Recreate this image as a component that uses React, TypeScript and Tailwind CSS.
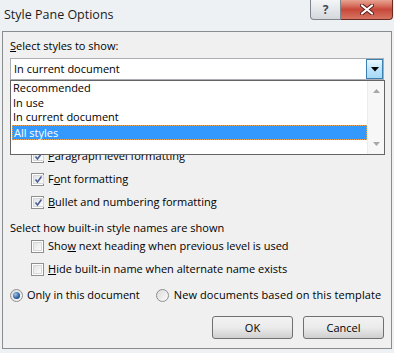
import React from 'react';

const FONT = "font-['Open_Sans','Liberation_Sans',sans-serif]";

function CheckBox({ checked }: { checked?: boolean }) {
    return (
        <span className="w-[13px] h-[13px] shrink-0 border border-[#8e8f8f] bg-white p-[1px] flex">
            <span className="flex-1 border border-[#d6d7d9] bg-gradient-to-br from-[#e3e4e6] to-[#fbfbfb] flex items-center justify-center">
                {checked && (
                    <svg width="9" height="9" viewBox="0 0 9 9">
                        <path d="M1.5 4.5 L3.5 7 L7.5 1.5" fill="none" stroke="#4a5f97" strokeWidth="1.6" />
                    </svg>
                )}
            </span>
        </span>
    );
}

function Radio({ checked }: { checked?: boolean }) {
    return (
        <span className="w-[13px] h-[13px] shrink-0 rounded-full border border-[#8e8f8f] bg-gradient-to-br from-[#dcdcdc] to-[#fafafa] flex items-center justify-center">
            {checked && (
                <span className="w-[7px] h-[7px] rounded-full bg-[radial-gradient(circle_at_35%_35%,#9fc3ea,#1b4f8f_70%)]" />
            )}
        </span>
    );
}

function CheckRow({ checked, children }: { checked?: boolean; children: React.ReactNode }) {
    return (
        <div className="h-[23px] flex items-center gap-[4px] pl-[21px] whitespace-nowrap">
            <CheckBox checked={checked} />
            <span>{children}</span>
        </div>
    );
}

function Btn({ children }: { children: React.ReactNode }) {
    return (
        <button className="w-[81px] h-[23px] rounded-[3px] border border-[#707070] bg-gradient-to-b from-[#f2f2f2] via-[#ebebeb] to-[#cfcfcf] text-[#000] leading-none">
            {children}
        </button>
    );
}

export default function App() {
    return (
        <div className={`w-[394px] h-[353px] bg-[#eef1f4] text-[11px] text-black overflow-hidden ${FONT}`}>
            {/* Title bar */}
            <div className="h-[31px] flex justify-between items-start">
                <span className="pl-[4px] pt-[6px] text-[12.5px] leading-[18px] text-[#1b1b1b]">Style Pane Options</span>
                <div className="flex mr-[1px]">
                    <div className="w-[31px] h-[20px] rounded-bl-[4px] border border-[#7e858d] border-t-0 bg-gradient-to-b from-[#f4f5f6] to-[#d4d8dc] flex items-center justify-center text-[#3d4a5a] text-[12px] font-bold leading-none">
                        ?
                    </div>
                    <div className="w-[52px] h-[20px] rounded-br-[4px] border border-[#6b2b22] border-t-0 border-l-0 bg-gradient-to-b from-[#e8a494] via-[#c8483a] to-[#d67562] flex items-center justify-center">
                        <svg width="14" height="11" viewBox="0 0 14 11">
                            <path d="M2 1.5 L12 9.5 M12 1.5 L2 9.5" stroke="#5a1e18" strokeWidth="4" strokeLinecap="round" />
                            <path d="M2 1.5 L12 9.5 M12 1.5 L2 9.5" stroke="#ffffff" strokeWidth="2.2" strokeLinecap="round" />
                        </svg>
                    </div>
                </div>
            </div>

            {/* Client area */}
            <div className="relative mx-[2px] w-[390px] h-[318px] border border-[#8a8c8e] bg-[#f0f0f0] px-[7px]">
                <div className="pt-[6px] leading-[15px]"><span className="underline">S</span>elect styles to show:</div>

                <div className="mt-[5px] h-[22px] border border-[#abadb3] bg-white flex items-stretch">
                    <span className="flex-1 pl-[3px] flex items-center">In current document</span>
                    <span className="w-[17px] border border-[#3c7fb1] bg-gradient-to-b from-[#eaf6fd] via-[#bee6fd] to-[#a7d9f5] flex items-center justify-center">
                        <svg width="8" height="5" viewBox="0 0 8 5"><path d="M0 0 H8 L4 4.5 Z" fill="#000" /></svg>
                    </span>
                </div>

                {/* space covered by the open list */}
                <div className="h-[65px]" />

                <CheckRow checked><span className="underline">P</span>aragraph level formatting</CheckRow>
                <CheckRow checked>F<span className="underline">o</span>nt formatting</CheckRow>
                <CheckRow checked><span className="underline">B</span>ullet and numbering formatting</CheckRow>

                <div className="mt-[6px] leading-[15px]">Select how built-in style names are shown</div>
                <CheckRow>Sho<span className="underline">w</span> next heading when previous level is used</CheckRow>
                <CheckRow><span className="underline">H</span>ide built-in name when alternate name exists</CheckRow>

                <div className="mt-[4px] h-[20px] flex items-center whitespace-nowrap">
                    <div className="flex items-center gap-[4px]">
                        <Radio checked />
                        <span>Only in this document</span>
                    </div>
                    <div className="ml-[16px] flex items-center gap-[5px]">
                        <Radio />
                        <span className="tracking-[0.1px]">New documents based on this template</span>
                    </div>
                </div>

                <div className="mt-[11px] flex justify-end gap-[10px]">
                    <Btn>OK</Btn>
                    <Btn>Cancel</Btn>
                </div>

                {/* Open dropdown list */}
                <div className="absolute left-[7px] right-[6px] top-[48px] h-[75px] border border-[#646464] bg-white flex">
                    <div className="flex-1 flex flex-col pl-[1px]">
                        <div className="h-[14.5px] leading-[14px] px-[1px]">Recommended</div>
                        <div className="h-[14.5px] leading-[14px] px-[1px]">In use</div>
                        <div className="h-[14.5px] leading-[14px] px-[1px]">In current document</div>
                        <div className="h-[15px] leading-[13px] px-[1px] bg-[#3399ff] text-white border border-dotted border-[#e8a55a]">All styles</div>
                    </div>
                    <div className="w-[17px] bg-[#f7f7f7] border-l border-[#ececec] flex flex-col justify-between items-center py-[8px]">
                        <svg width="7" height="4" viewBox="0 0 7 4"><path d="M0 4 L3.5 0 L7 4 Z" fill="#a8a8a8" /></svg>
                        <svg width="7" height="4" viewBox="0 0 7 4"><path d="M0 0 L7 0 L3.5 4 Z" fill="#a8a8a8" /></svg>
                    </div>
                </div>
            </div>
        </div>
    );
}
